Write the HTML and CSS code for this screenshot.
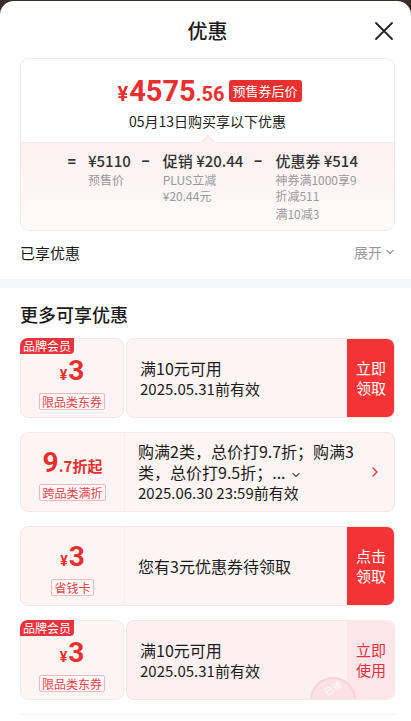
FILE: index.html
```html
<!DOCTYPE html>
<html lang="zh-CN">
<head>
<meta charset="utf-8">
<title>优惠</title>
<link rel="stylesheet" href="styles.css">
</head>
<body>
<div class="sheet">
  <header class="header">
    <h1 class="title">优惠</h1>
    <span class="close">
      <svg width="20" height="20" viewBox="0 0 20 20"><path d="M2 2L18 18M18 2L2 18" stroke="#222" stroke-width="1.8" fill="none" stroke-linecap="round"/></svg>
    </span>
  </header>

  <section class="price-card">
    <div class="price-top">
      <div class="price-line">
        <span class="price"><span class="yen">¥</span><span class="int">4575</span><span class="dec">.56</span></span>
        <span class="badge">预售券后价</span>
      </div>
      <div class="price-sub">05月13日购买享以下优惠</div>
    </div>
    <div class="price-bottom">
      <span class="arrow-up"></span>
      <div class="calc">
        <span class="eq">=</span>
        <div class="col">
          <div class="amt">¥5110</div>
          <div class="note">预售价</div>
        </div>
        <span class="op">−</span>
        <div class="col">
          <div class="amt">促销 ¥20.44</div>
          <div class="note">PLUS立减<br>¥20.44元</div>
        </div>
        <span class="op">−</span>
        <div class="col">
          <div class="amt">优惠券 ¥514</div>
          <div class="note">神券满1000享9<br>折减511</div>
          <div class="note note-gap">满10减3</div>
        </div>
      </div>
    </div>
  </section>

  <div class="enjoyed">
    <span class="enjoyed-label">已享优惠</span>
    <span class="expand">展开
      <svg width="10" height="10" viewBox="0 0 10 10"><path d="M2 3.5L5 6.5L8 3.5" stroke="#999" stroke-width="1.2" fill="none" stroke-linecap="round" stroke-linejoin="round"/></svg>
    </span>
  </div>

  <div class="band"></div>

  <h2 class="more-title">更多可享优惠</h2>

  <div class="coupons">
    <div class="coupon ticket">
      <div class="c-left piece">
        <span class="tag">品牌会员</span>
        <div class="amount"><span class="y">¥</span><span class="n">3</span></div>
        <span class="kind">限品类东券</span>
      </div>
      <div class="c-right piece">
        <div class="c-text">
          <div class="c-main">满10元可用</div>
          <div class="c-date">2025.05.31前有效</div>
        </div>
        <div class="btn">立即<br>领取</div>
      </div>
    </div>

    <div class="coupon single">
      <div class="c-left">
        <div class="amount"><span class="n disc">9</span><span class="d">.7折起</span></div>
        <span class="kind">跨品类满折</span>
      </div>
      <div class="c-right">
        <div class="c-text">
          <div class="c-main multi">购满2类，总价打9.7折；购满3类，总价打9.5折；...
            <svg class="more-ico" width="10" height="10" viewBox="0 0 10 10"><path d="M2 3.5L5 6.5L8 3.5" stroke="#555" stroke-width="1.2" fill="none" stroke-linecap="round" stroke-linejoin="round"/></svg>
          </div>
          <div class="c-date">2025.06.30 23:59前有效</div>
        </div>
        <div class="chev">
          <svg width="10" height="12" viewBox="0 0 10 12"><path d="M3 2L7 6L3 10" stroke="#e4393c" stroke-width="1.4" fill="none" stroke-linecap="round" stroke-linejoin="round"/></svg>
        </div>
      </div>
    </div>

    <div class="coupon single">
      <div class="c-left">
        <div class="amount"><span class="y">¥</span><span class="n">3</span></div>
        <span class="kind">省钱卡</span>
      </div>
      <div class="c-right">
        <div class="c-text">
          <div class="c-main">您有3元优惠券待领取</div>
        </div>
        <div class="btn">点击<br>领取</div>
      </div>
    </div>

    <div class="coupon ticket">
      <div class="c-left piece">
        <span class="tag">品牌会员</span>
        <div class="amount"><span class="y">¥</span><span class="n">3</span></div>
        <span class="kind">限品类东券</span>
      </div>
      <div class="c-right piece used">
        <div class="c-text">
          <div class="c-main">满10元可用</div>
          <div class="c-date">2025.05.31前有效</div>
        </div>
        <div class="btn btn-light">立即<br>使用</div>
        <span class="stamp"><span class="stamp-text">已领</span></span>
      </div>
    </div>
  </div>
  <div class="bottom-line"></div>
</div>
</body>
</html>
```

FILE: styles.css
```css
* { box-sizing: border-box; }
html, body { margin: 0; padding: 0; }
body {
  background: #3b2c24;
  font-family: "Noto Sans CJK SC", "Noto Sans", Roboto, sans-serif;
  color: #1a1a1a;
  width: 411px;
  height: 721px;
  overflow: hidden;
}
.sheet {
  margin-top: 1px;
  background: #fff;
  border-radius: 14px 14px 0 0;
  height: 720px;
  padding: 0 16px 0 20px;
}
.header {
  height: 57px;
  display: flex;
  align-items: center;
  justify-content: center;
  position: relative;
}
.title {
  margin: 0;
  font-size: 20px;
  font-weight: 500;
  line-height: 1;
  color: #1a1a1a;
  padding-top: 2px;
}
.close {
  position: absolute;
  right: 1px;
  top: 20px;
  width: 20px;
  height: 20px;
  display: flex;
}

/* price card */
.price-card {
  border: 1px solid #f3e7e8;
  border-radius: 9px;
  overflow: hidden;
  height: 173px;
  display: flex;
  flex-direction: column;
}
.price-top {
  height: 83px;
  display: flex;
  flex-direction: column;
  align-items: center;
  padding-top: 18px;
}
.price-line {
  display: flex;
  align-items: center;
  gap: 4px;
  height: 28px;
  padding-left: 4px;
}
.price {
  color: #e9302f;
  font-family: Roboto, "Noto Sans", sans-serif;
  font-weight: 700;
  display: flex;
  align-items: baseline;
}
.price .yen { font-size: 20px; margin-right: 1px; }
.price .int { font-size: 29px; }
.price .dec { font-size: 20px; }
.badge {
  background: #e9302f;
  color: #fff;
  font-size: 13px;
  line-height: 22px;
  height: 22px;
  padding: 0 4px;
  border-radius: 3px;
}
.price-sub {
  margin-top: 7px;
  font-size: 14px;
  line-height: 18px;
  color: #222;
}
.price-bottom {
  flex: 1;
  position: relative;
  background: linear-gradient(180deg, #fdf1f2 0%, #fdf6f6 60%, #fefafa 100%);
  border-top: 1px solid #f8eced;
  padding-top: 7px;
}
.arrow-up {
  position: absolute;
  top: -6px;
  left: 182px;
  width: 10px;
  height: 10px;
  background: #fdf1f2;
  border-left: 1px solid #f3e4e5;
  border-top: 1px solid #f3e4e5;
  transform: rotate(45deg);
}
.calc {
  display: flex;
  align-items: flex-start;
  padding-left: 46px;
}
.eq, .op {
  font-family: Roboto, "Noto Sans", sans-serif;
  font-size: 17px;
  line-height: 22px;
  color: #333;
  font-weight: 500;
}
.eq { width: 21px; }
.op { width: 10px; margin: 0 12px 0 10px; text-align: center; }
.col { display: flex; flex-direction: column; }
.amt {
  font-size: 15px;
  line-height: 22px;
  font-weight: 500;
  color: #333;
  white-space: nowrap;
}
.note {
  font-size: 12px;
  line-height: 16px;
  color: #999;
  margin-top: 0;
}
.note-gap { margin-top: 2px; }

/* enjoyed */
.enjoyed {
  height: 48px;
  display: flex;
  align-items: center;
  justify-content: space-between;
  padding-bottom: 6px;
}
.enjoyed-label { font-size: 15px; color: #1a1a1a; }
.expand {
  font-size: 14px;
  color: #999;
  display: flex;
  align-items: center;
  gap: 3px;
}
.band {
  height: 9px;
  background: #f4f6f9;
  margin: 0 -16px 0 -20px;
}
.more-title {
  margin: 0;
  font-size: 18px;
  font-weight: 500;
  line-height: 24px;
  padding: 14px 0 12px;
  color: #1a1a1a;
}

/* coupons */
.coupons { display: flex; flex-direction: column; gap: 14px; }
.coupon {
  height: 80px;
  display: flex;
  position: relative;
}
.c-left {
  width: 104px;
  position: relative;
  display: flex;
  flex-direction: column;
  align-items: center;
  justify-content: center;
  padding-top: 10px;
}
.piece {
  background: #fdf4f4;
  border: 1px solid #f5e7e8;
  border-radius: 8px;
}
.ticket { gap: 2px; }
.c-right {
  flex: 1;
  display: flex;
  align-items: center;
  position: relative;
  overflow: hidden;
}
.single {
  background: #fdf4f4;
  border: 1px solid #f5e7e8;
  border-radius: 8px;
  overflow: hidden;
}
.single .c-left { border-right: 1px solid #f7ecec; padding-top: 6px; }
.tag {
  position: absolute;
  top: -1px;
  left: -1px;
  background: #e9323c;
  color: #fff;
  font-size: 12px;
  line-height: 16px;
  padding: 0 3px;
  border-radius: 8px 0 4px 0;
}
.amount {
  color: #e9302f;
  font-family: Roboto, "Noto Sans", sans-serif;
  font-weight: 700;
  display: flex;
  align-items: baseline;
  line-height: 28px;
}
.amount .y { font-size: 14px; margin-right: 1px; }
.amount .n { font-size: 28px; }
.amount .d { font-size: 15px; font-family: "Noto Sans CJK SC", sans-serif; }
.kind {
  margin-top: 4px;
  font-size: 12px;
  line-height: 15px;
  color: #e2474d;
  border: 1px solid #f1b9bb;
  border-radius: 2px;
  padding: 0 2px;
  background: #fff7f7;
}
.c-text {
  flex: 1;
  padding-left: 13px;
  display: flex;
  flex-direction: column;
  justify-content: center;
}
.c-main {
  font-size: 16px;
  line-height: 21px;
  color: #1a1a1a;
}
.more-ico { margin-left: 2px; vertical-align: middle; }
.c-date {
  font-size: 15px;
  line-height: 20px;
  color: #1a1a1a;
}
.btn {
  width: 48px;
  align-self: stretch;
  background: #f43434;
  color: #fff;
  font-size: 15px;
  line-height: 20px;
  display: flex;
  align-items: center;
  justify-content: center;
  text-align: center;
  margin: -1px -1px -1px 0;
  border-radius: 0 8px 8px 0;
}
.btn-light {
  background: #fce6ea;
  color: #e2333d;
}
.used { background: #fdf0f2; }
.chev {
  width: 30px;
  display: flex;
  justify-content: center;
  padding-right: 8px;
  flex-shrink: 0;
}
.stamp {
  position: absolute;
  right: 38px;
  bottom: -24px;
  width: 46px;
  height: 46px;
  border-radius: 50%;
  border: 2px solid #f6d3d8;
  background: #fbe0e5;
  display: flex;
  justify-content: center;
  padding-top: 4px;
}
.stamp-text {
  font-size: 9px;
  line-height: 12px;
  color: #fff;
  transform: rotate(-30deg);
  height: 12px;
}
.bottom-line {
  margin-top: 14px;
  height: 1px;
  background: #f3f3f3;
}
```
